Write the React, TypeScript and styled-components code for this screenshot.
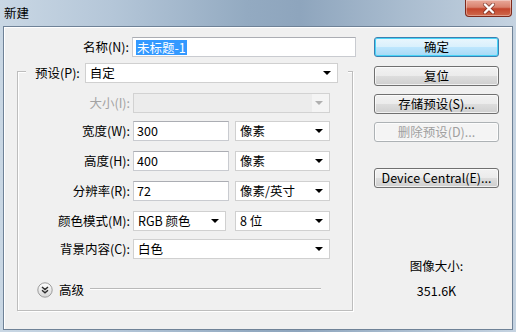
import React from 'react';
import styled, {createGlobalStyle} from 'styled-components';

const GlobalStyle = createGlobalStyle`
  html, body {
    margin: 0;
    padding: 0;
    width: 516px;
    height: 332px;
    overflow: hidden;
  }
  body {
    font-family: "Noto Sans CJK SC", "Noto Sans", sans-serif;
    font-size: 12.5px;
    color: #000;
  }
`;

const Window = styled.div`
  width: 516px;
  height: 332px;
  box-sizing: border-box;
  display: flex;
  flex-direction: column;
  padding: 0 3px 2px 3px;
  background: linear-gradient(90deg, #c9d7e4 0%, #b4c6d8 22%, #93aac1 48%, #8ea5bd 58%, #a9bccf 78%, #c5d3e1 100%);
`;

const TitleBar = styled.div`
  height: 26px;
  display: flex;
  align-items: flex-start;
  justify-content: space-between;
`;

const Title = styled.div`
  padding: 5px 0 0 1px;
  line-height: 16px;
  color: #000;
`;

const CloseButton = styled.div`
  width: 47px;
  height: 17px;
  margin-right: 1px;
  box-sizing: border-box;
  border: 1px solid #7e2a1c;
  border-top: none;
  border-radius: 0 0 4px 4px;
  background: linear-gradient(180deg, #e9a99a 0%, #d9826d 45%, #c4452c 55%, #cf6a4d 100%);
  box-shadow: inset 0 0 0 1px rgba(255, 255, 255, 0.35);
  display: flex;
  align-items: center;
  justify-content: center;
`;

const Client = styled.div`
  flex: 1;
  display: flex;
  background: #f0f0f0;
  border: 1px solid #6f8297;
  box-shadow: inset 1px 1px 0 #fff;
`;

const FormSide = styled.div`
  width: 353px;
  display: flex;
  flex-direction: column;
`;

const NameRow = styled.div`
  margin-top: 10px;
  display: flex;
  align-items: center;
  gap: 3px;
`;

const Label = styled.div<{$width?: number; $disabled?: boolean}>`
  width: ${p => (p.$width ? `${p.$width}px` : 'auto')};
  text-align: right;
  white-space: nowrap;
  line-height: 16px;
  color: ${p => (p.$disabled ? '#a3a3a3' : '#000')};
`;

const TextBox = styled.div<{$width: number}>`
  width: ${p => p.$width}px;
  height: 20px;
  box-sizing: border-box;
  background: #fff;
  border: 1px solid #c9cbd0;
  border-top-color: #abadb3;
  display: flex;
  align-items: center;
  padding-left: 3px;
  line-height: 16px;
`;

const Selected = styled.span`
  background: #3399ff;
  color: #fff;
  padding: 0 1px;
  line-height: 15px;
`;

const Select = styled.div<{$width: number; $disabled?: boolean}>`
  position: relative;
  width: ${p => p.$width}px;
  height: 20px;
  box-sizing: border-box;
  background: ${p => (p.$disabled ? '#ececec' : '#fff')};
  border: 1px solid ${p => (p.$disabled ? '#d2d2d2' : '#d0d0d0')};
  display: flex;
  align-items: center;
  padding-left: 4px;
  line-height: 16px;
  &::after {
    content: '';
    position: absolute;
    right: 6px;
    top: 7px;
    border-left: 4px solid transparent;
    border-right: 4px solid transparent;
    border-top: 4px solid ${p => (p.$disabled ? '#b0b0b0' : '#000')};
  }
`;

const DisabledArrowPad = styled.div`
  position: absolute;
  right: 0;
  top: 0;
  bottom: 0;
  width: 17px;
  background: #f4f4f4;
`;

const GroupBox = styled.div`
  margin: 14px 0 0 13px;
  width: 336px;
  height: 240px;
  box-sizing: border-box;
  border: 1px solid #bdbdbd;
  box-shadow: 1px 1px 0 #fff, inset 1px 1px 0 #fff;
  display: flex;
  flex-direction: column;
`;

const PresetRow = styled.div`
  margin: -9px 0 0 8px;
  width: 322px;
  box-sizing: border-box;
  padding: 0 7px 0 9px;
  background: #f0f0f0;
  display: flex;
  align-items: center;
  gap: 5px;
`;

const FieldRow = styled.div<{$top: number}>`
  margin-top: ${p => p.$top}px;
  display: flex;
  align-items: center;
`;

const Controls = styled.div<{$gap: number}>`
  margin-left: 3px;
  display: flex;
  gap: ${p => p.$gap}px;
`;

const AdvancedRow = styled.div`
  margin: 23px 31px 0 19px;
  display: flex;
  align-items: center;
`;

const AdvancedText = styled.span`
  margin: 0 6px 0 6px;
  line-height: 16px;
`;

const EtchedLine = styled.div`
  flex: 1;
  height: 0;
  border-top: 1px solid #b9b9b9;
  border-bottom: 1px solid #fff;
  margin-top: -2px;
`;

const ButtonSide = styled.div`
  margin-left: 17px;
  width: 125px;
  display: flex;
  flex-direction: column;
`;

const Button = styled.div<{$top: number; $primary?: boolean; $disabled?: boolean}>`
  margin-top: ${p => p.$top}px;
  height: 20px;
  box-sizing: border-box;
  border: 1px solid ${p => (p.$primary ? '#3c7fb1' : p.$disabled ? '#adb2b5' : '#707070')};
  border-radius: 3px;
  background: ${p =>
    p.$disabled
      ? '#f4f4f4'
      : p.$primary
      ? 'linear-gradient(180deg, #eaf6fd 0%, #d9f0fc 50%, #bee6fd 51%, #a7d9f5 100%)'
      : 'linear-gradient(180deg, #f2f2f2 0%, #ebebeb 50%, #dddddd 51%, #cfcfcf 100%)'};
  box-shadow: inset 0 0 0 1px ${p => (p.$primary ? '#48d4f7' : 'rgba(255,255,255,0.7)')};
  color: ${p => (p.$disabled ? '#a0a0a0' : '#000')};
  display: flex;
  align-items: center;
  justify-content: center;
  line-height: 16px;
  white-space: nowrap;
`;

const SizeInfo = styled.div`
  margin-top: 70px;
  display: flex;
  flex-direction: column;
  align-items: center;
  gap: 9px;
  line-height: 16px;
`;

function CloseGlyph() {
  return (
    <svg width="14" height="11" viewBox="0 0 14 11">
      <path d="M3 1.5 L11 9.5 M11 1.5 L3 9.5" stroke="#5a2018" strokeWidth="4" strokeLinecap="round" opacity="0.55" />
      <path d="M3 1.5 L11 9.5 M11 1.5 L3 9.5" stroke="#fff" strokeWidth="2.4" strokeLinecap="round" />
    </svg>
  );
}

function ExpandIcon() {
  return (
    <svg width="16" height="16" viewBox="0 0 16 16">
      <defs>
        <linearGradient id="expandFill" x1="0" y1="0" x2="0" y2="1">
          <stop offset="0" stopColor="#ffffff" />
          <stop offset="1" stopColor="#d6d6d6" />
        </linearGradient>
      </defs>
      <circle cx="8" cy="8" r="7.2" fill="url(#expandFill)" stroke="#9c9c9c" />
      <path d="M5 5 L8 7.6 L11 5 M5 8.2 L8 10.8 L11 8.2" fill="none" stroke="#2b2b2b" strokeWidth="1.4" />
    </svg>
  );
}

export default function App() {
  return (
    <>
      <GlobalStyle />
      <Window>
        <TitleBar>
          <Title>新建</Title>
          <CloseButton>
            <CloseGlyph />
          </CloseButton>
        </TitleBar>
        <Client>
          <FormSide>
            <NameRow>
              <Label $width={125}>名称(N):</Label>
              <TextBox $width={224}>
                <Selected>未标题-1</Selected>
              </TextBox>
            </NameRow>

            <GroupBox>
              <PresetRow>
                <Label>预设(P):</Label>
                <Select $width={253}>自定</Select>
              </PresetRow>

              <FieldRow $top={10}>
                <Label $width={112} $disabled>大小(I):</Label>
                <Controls $gap={0}>
                  <Select $width={197} $disabled>
                    <DisabledArrowPad />
                  </Select>
                </Controls>
              </FieldRow>

              <FieldRow $top={8}>
                <Label $width={112}>宽度(W):</Label>
                <Controls $gap={6}>
                  <TextBox $width={96}>300</TextBox>
                  <Select $width={95}>像素</Select>
                </Controls>
              </FieldRow>

              <FieldRow $top={10}>
                <Label $width={112}>高度(H):</Label>
                <Controls $gap={6}>
                  <TextBox $width={96}>400</TextBox>
                  <Select $width={95}>像素</Select>
                </Controls>
              </FieldRow>

              <FieldRow $top={10}>
                <Label $width={112}>分辨率(R):</Label>
                <Controls $gap={6}>
                  <TextBox $width={96}>72</TextBox>
                  <Select $width={95}>像素/英寸</Select>
                </Controls>
              </FieldRow>

              <FieldRow $top={10}>
                <Label $width={112}>颜色模式(M):</Label>
                <Controls $gap={9}>
                  <Select $width={93}>RGB 颜色</Select>
                  <Select $width={95}>8 位</Select>
                </Controls>
              </FieldRow>

              <FieldRow $top={8}>
                <Label $width={112}>背景内容(C):</Label>
                <Controls $gap={0}>
                  <Select $width={197}>白色</Select>
                </Controls>
              </FieldRow>

              <AdvancedRow>
                <ExpandIcon />
                <AdvancedText>高级</AdvancedText>
                <EtchedLine />
              </AdvancedRow>
            </GroupBox>
          </FormSide>

          <ButtonSide>
            <Button $top={10} $primary>确定</Button>
            <Button $top={9}>复位</Button>
            <Button $top={8}>存储预设(S)...</Button>
            <Button $top={8} $disabled>删除预设(D)...</Button>
            <Button $top={26}>Device Central(E)...</Button>
            <SizeInfo>
              <span>图像大小:</span>
              <span>351.6K</span>
            </SizeInfo>
          </ButtonSide>
        </Client>
      </Window>
    </>
  );
}
